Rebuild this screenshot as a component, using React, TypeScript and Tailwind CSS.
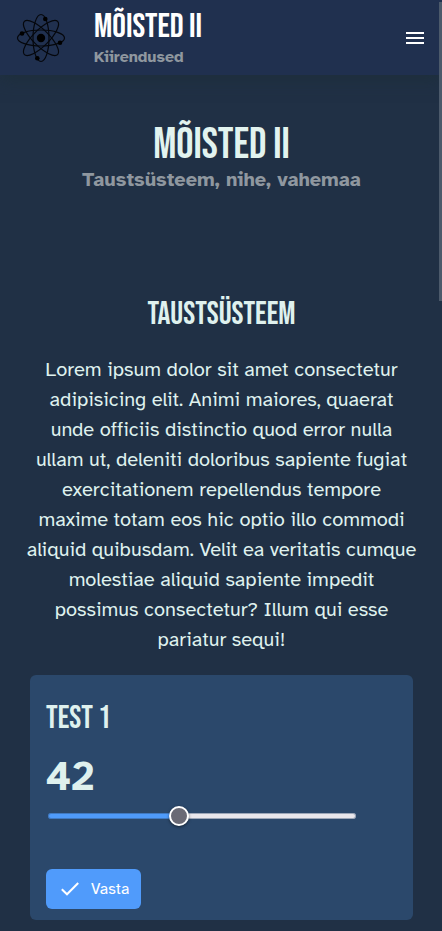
import { useState } from "react";

const display = "font-['Bebas_Neue','Roboto_Condensed','Liberation_Sans_Narrow',sans-serif] font-normal uppercase";

function Atom() {
  return (
    <svg viewBox="0 0 50 50" className="size-[50px] shrink-0" fill="none" stroke="#05070c" strokeWidth="1.2" aria-hidden="true">
      <ellipse cx="25" cy="25" rx="23.5" ry="8" />
      <ellipse cx="25" cy="25" rx="23.5" ry="8" transform="rotate(45 25 25)" />
      <ellipse cx="25" cy="25" rx="23.5" ry="8" transform="rotate(90 25 25)" />
      <ellipse cx="25" cy="25" rx="23.5" ry="8" transform="rotate(135 25 25)" />
      <g fill="#000" stroke="none">
        <circle cx="25" cy="25" r="4.2" />
        <circle cx="29.3" cy="6" r="2.3" />
        <circle cx="6" cy="20.5" r="2.3" />
        <circle cx="44" cy="29.7" r="2.3" />
        <circle cx="21.3" cy="45.3" r="2.3" />
      </g>
    </svg>
  );
}

export default function App() {
  const [value, setValue] = useState(42);
  return (
    <div className="relative min-h-screen overflow-hidden bg-[#203045] font-['Atkinson_Hyperlegible','Atkinson_Hyperlegible_Next','Noto_Sans',sans-serif] text-[#dff1ee]">
      <header className="flex h-[75px] items-center bg-[#20304f] pr-[15px] pl-4 shadow-[0_4px_16px_rgba(28,46,54,0.7)]">
        <Atom />
        <div className="ml-7 flex-1 pt-[2px]">
          <p className={`${display} text-[34px] leading-9 text-white`}>Mõisted II</p>
          <p className="text-[16px] leading-6 font-bold text-[#8f979f]">Kiirendused</p>
        </div>
        <button type="button" aria-label="Menu" className="flex size-6 items-center justify-center text-white">
          <svg viewBox="0 0 18 12" className="h-3 w-[18px]" fill="currentColor" aria-hidden="true">
            <path d="M0 0h18v2H0zM0 5h18v2H0zM0 10h18v2H0z" />
          </svg>
        </button>
      </header>

      <main className="pr-[29px] pb-3 pl-[30px] text-center">
        <h1 className={`${display} pt-12 text-[43px] leading-[45px] text-[#e2f3ef]`}>Mõisted II</h1>
        <p className="text-[20px] leading-6 font-bold text-[#8f979f]">Taustsüsteem, nihe, vahemaa</p>

        <h2 className={`${display} mt-[105px] text-[32px] leading-9`}>Taustsüsteem</h2>
        <p className="-mx-1 mt-[22px] text-[20px] leading-[30px]">
          Lorem ipsum dolor sit amet consectetur adipisicing elit. Animi maiores, quaerat unde officiis distinctio quod
          error nulla ullam ut, deleniti doloribus sapiente fugiat exercitationem repellendus tempore maxime totam eos
          hic optio illo commodi aliquid quibusdam. Velit ea veritatis cumque molestiae aliquid sapiente impedit
          possimus consectetur? Illum qui esse pariatur sequi!
        </p>

        <section className="mt-5 rounded-md bg-[#2b486b] px-4 pt-[26px] pb-[11px] text-left">
          <h2 className={`${display} text-[32px] leading-9`}>Test 1</h2>
          <label htmlFor="answer" className="mt-[15px] block text-[40px] leading-[50px] font-bold">
            {value}
          </label>
          <input
            id="answer"
            type="range"
            min="0"
            max="100"
            value={value}
            onChange={(e) => setValue(Number(e.target.value))}
            style={{
              backgroundImage: `linear-gradient(to right, #4f9bfa ${value}%, #e9e7ec ${value}%)`,
            }}
            className="mx-[2px] mt-[11px] block h-[6px] w-[308px] max-w-full appearance-none rounded-[3px] shadow-[inset_0_0_0_1px_rgba(43,72,107,0.4)] [&::-webkit-slider-thumb]:size-5 [&::-webkit-slider-thumb]:appearance-none [&::-webkit-slider-thumb]:rounded-full [&::-webkit-slider-thumb]:border-2 [&::-webkit-slider-thumb]:border-solid [&::-webkit-slider-thumb]:border-white [&::-webkit-slider-thumb]:bg-[#6a6a75] [&::-webkit-slider-thumb]:shadow-[0_1px_3px_rgba(0,0,0,0.5)]"
          />
          <button
            type="button"
            className="mt-[50px] flex h-10 items-center gap-3 rounded-md bg-[#509bfb] pr-3 pl-[15px] text-[16px] text-white"
          >
            <svg viewBox="0 0 18 14" className="h-[14px] w-[18px]" fill="none" stroke="currentColor" strokeWidth="2" aria-hidden="true">
              <path d="M.8 7.2 6 12.3 17.2 1" />
            </svg>
            Vasta
          </button>
        </section>
      </main>
      <div className="absolute top-[2px] right-0 h-[299px] w-[3px] bg-[#4c5a6b]" />
    </div>
  );
}
